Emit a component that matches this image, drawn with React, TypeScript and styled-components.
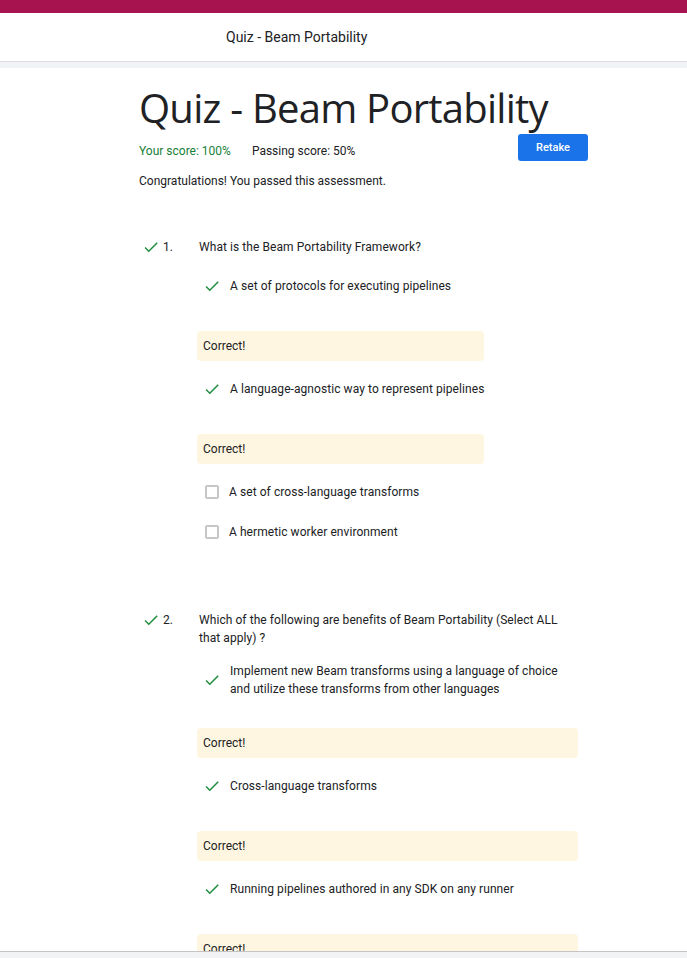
import React from "react";
import styled, { createGlobalStyle } from "styled-components";

const GlobalStyle = createGlobalStyle`
  html, body { margin: 0; padding: 0; height: 100%; }
  body {
    font-family: Roboto, "Liberation Sans", sans-serif;
    color: #202124;
    background: #f1f3f4;
  }
  #root { height: 100%; }
`;

const Page = styled.div`
  display: flex;
  flex-direction: column;
  height: 100vh;
  overflow: hidden;
`;

const TopBar = styled.div`
  flex-shrink: 0;
  height: 13px;
  background: #a6134f;
`;

const Header = styled.header`
  flex-shrink: 0;
  height: 48px;
  background: #fff;
  border-bottom: 1px solid #dadce0;
  display: flex;
  align-items: center;
  padding-left: 226px;
  font-size: 14px;
  color: #202124;
`;

const Card = styled.main`
  flex: 1;
  min-height: 0;
  margin-top: 6px;
  background: #fff;
  overflow: hidden;
`;

const Footer = styled.div`
  flex-shrink: 0;
  height: 6px;
  border-top: 1px solid #c4c4c4;
  background: #f1f3f4;
`;

const Content = styled.div`
  width: 449px;
  padding: 16px 0 0 139px;
`;

const Title = styled.h1`
  margin: 0;
  font-family: "Open Sans", Lato, sans-serif;
  font-weight: 400;
  font-size: 40px;
  line-height: 48px;
  letter-spacing: -0.75px;
  color: #202124;
`;

const ScoreRow = styled.div`
  display: flex;
  justify-content: space-between;
  align-items: flex-start;
  margin-top: 2px;
`;

const Scores = styled.div`
  display: flex;
  gap: 21px;
  margin-top: 8px;
  font-size: 12px;
  line-height: 18px;
`;

const Score = styled.span<{ $pass?: boolean }>`
  color: ${(p) => (p.$pass ? "#188038" : "#202124")};
`;

const RetakeButton = styled.button`
  width: 70px;
  height: 27px;
  border: none;
  border-radius: 3px;
  background: #1a73e8;
  color: #fff;
  font-family: Roboto, sans-serif;
  font-size: 11px;
  font-weight: 500;
  padding: 0;
`;

const Congrats = styled.p`
  margin: 11px 0 0;
  font-size: 12px;
  line-height: 18px;
`;

const QuestionList = styled.div`
  margin-top: 48px;
  display: flex;
  flex-direction: column;
  gap: 60px;
`;

const QuestionBlock = styled.section``;

const QHeader = styled.div`
  display: flex;
  align-items: flex-start;
  font-size: 12px;
  line-height: 18px;
`;

const Marker = styled.div`
  width: 58px;
  flex-shrink: 0;
  display: flex;
  align-items: center;
  height: 18px;
  padding-left: 3px;
  box-sizing: border-box;
`;

const Num = styled.span`
  margin-left: 3px;
`;

const QText = styled.div`
  padding-left: 2px;
  max-width: 379px;
  letter-spacing: 0.07px;
`;

const Options = styled.div`
  margin: 9px 0 0 58px;
  width: fit-content;
  max-width: 381px;
`;

const OptionRow = styled.div<{ $checked: boolean }>`
  display: flex;
  align-items: center;
  gap: ${(p) => (p.$checked ? "9px" : "10px")};
  box-sizing: border-box;
  min-height: 40px;
  padding: 6px 0 4px ${(p) => (p.$checked ? "6px" : "8px")};
  font-size: 12px;
  line-height: 18px;
  letter-spacing: 0.07px;
`;

const IconBox = styled.span`
  flex-shrink: 0;
  width: 18px;
  height: 18px;
  display: flex;
  align-items: center;
  justify-content: center;
`;

const CheckBox = styled.span`
  flex-shrink: 0;
  width: 14px;
  height: 14px;
  box-sizing: border-box;
  border: 2px solid #c6c6c6;
  border-radius: 2px;
`;

const OptionText = styled.span`
  min-width: 0;
`;

const Feedback = styled.div`
  margin: 26px 0 7px;
  height: 30px;
  background: #fef6e0;
  border-radius: 4px;
  padding: 0 6px;
  display: flex;
  align-items: center;
  font-size: 12px;
`;

const CheckIcon = () => (
  <svg width="18" height="18" viewBox="0 0 24 24" aria-hidden="true">
    <path fill="#1e8e3e" d="M9 16.17L4.83 12l-1.42 1.41L9 19 21 7l-1.41-1.41z" />
  </svg>
);

type Opt = { text: string; checked: boolean };
type Q = { n: number; text: string; options: Opt[] };

const questions: Q[] = [
  {
    n: 1,
    text: "What is the Beam Portability Framework?",
    options: [
      { text: "A set of protocols for executing pipelines", checked: true },
      { text: "A language-agnostic way to represent pipelines", checked: true },
      { text: "A set of cross-language transforms", checked: false },
      { text: "A hermetic worker environment", checked: false },
    ],
  },
  {
    n: 2,
    text: "Which of the following are benefits of Beam Portability (Select ALL that apply) ?",
    options: [
      {
        text: "Implement new Beam transforms using a language of choice and utilize these transforms from other languages",
        checked: true,
      },
      { text: "Cross-language transforms", checked: true },
      { text: "Running pipelines authored in any SDK on any runner", checked: true },
      { text: "Hermetic worker environment", checked: true },
    ],
  },
];

export default function App() {
  return (
    <>
      <GlobalStyle />
      <Page>
        <TopBar />
        <Header>Quiz - Beam Portability</Header>
        <Card>
          <Content>
            <Title>Quiz - Beam Portability</Title>
            <ScoreRow>
              <Scores>
                <Score $pass>Your score: 100%</Score>
                <Score>Passing score: 50%</Score>
              </Scores>
              <RetakeButton>Retake</RetakeButton>
            </ScoreRow>
            <Congrats>Congratulations! You passed this assessment.</Congrats>
            <QuestionList>
              {questions.map((q) => (
                <QuestionBlock key={q.n}>
                  <QHeader>
                    <Marker>
                      <CheckIcon />
                      <Num>{q.n}.</Num>
                    </Marker>
                    <QText>{q.text}</QText>
                  </QHeader>
                  <Options>
                    {q.options.map((o) => (
                      <React.Fragment key={o.text}>
                        <OptionRow $checked={o.checked}>
                          {o.checked ? (
                            <IconBox>
                              <CheckIcon />
                            </IconBox>
                          ) : (
                            <CheckBox />
                          )}
                          <OptionText>{o.text}</OptionText>
                        </OptionRow>
                        {o.checked && <Feedback>Correct!</Feedback>}
                      </React.Fragment>
                    ))}
                  </Options>
                </QuestionBlock>
              ))}
            </QuestionList>
          </Content>
        </Card>
        <Footer />
      </Page>
    </>
  );
}
